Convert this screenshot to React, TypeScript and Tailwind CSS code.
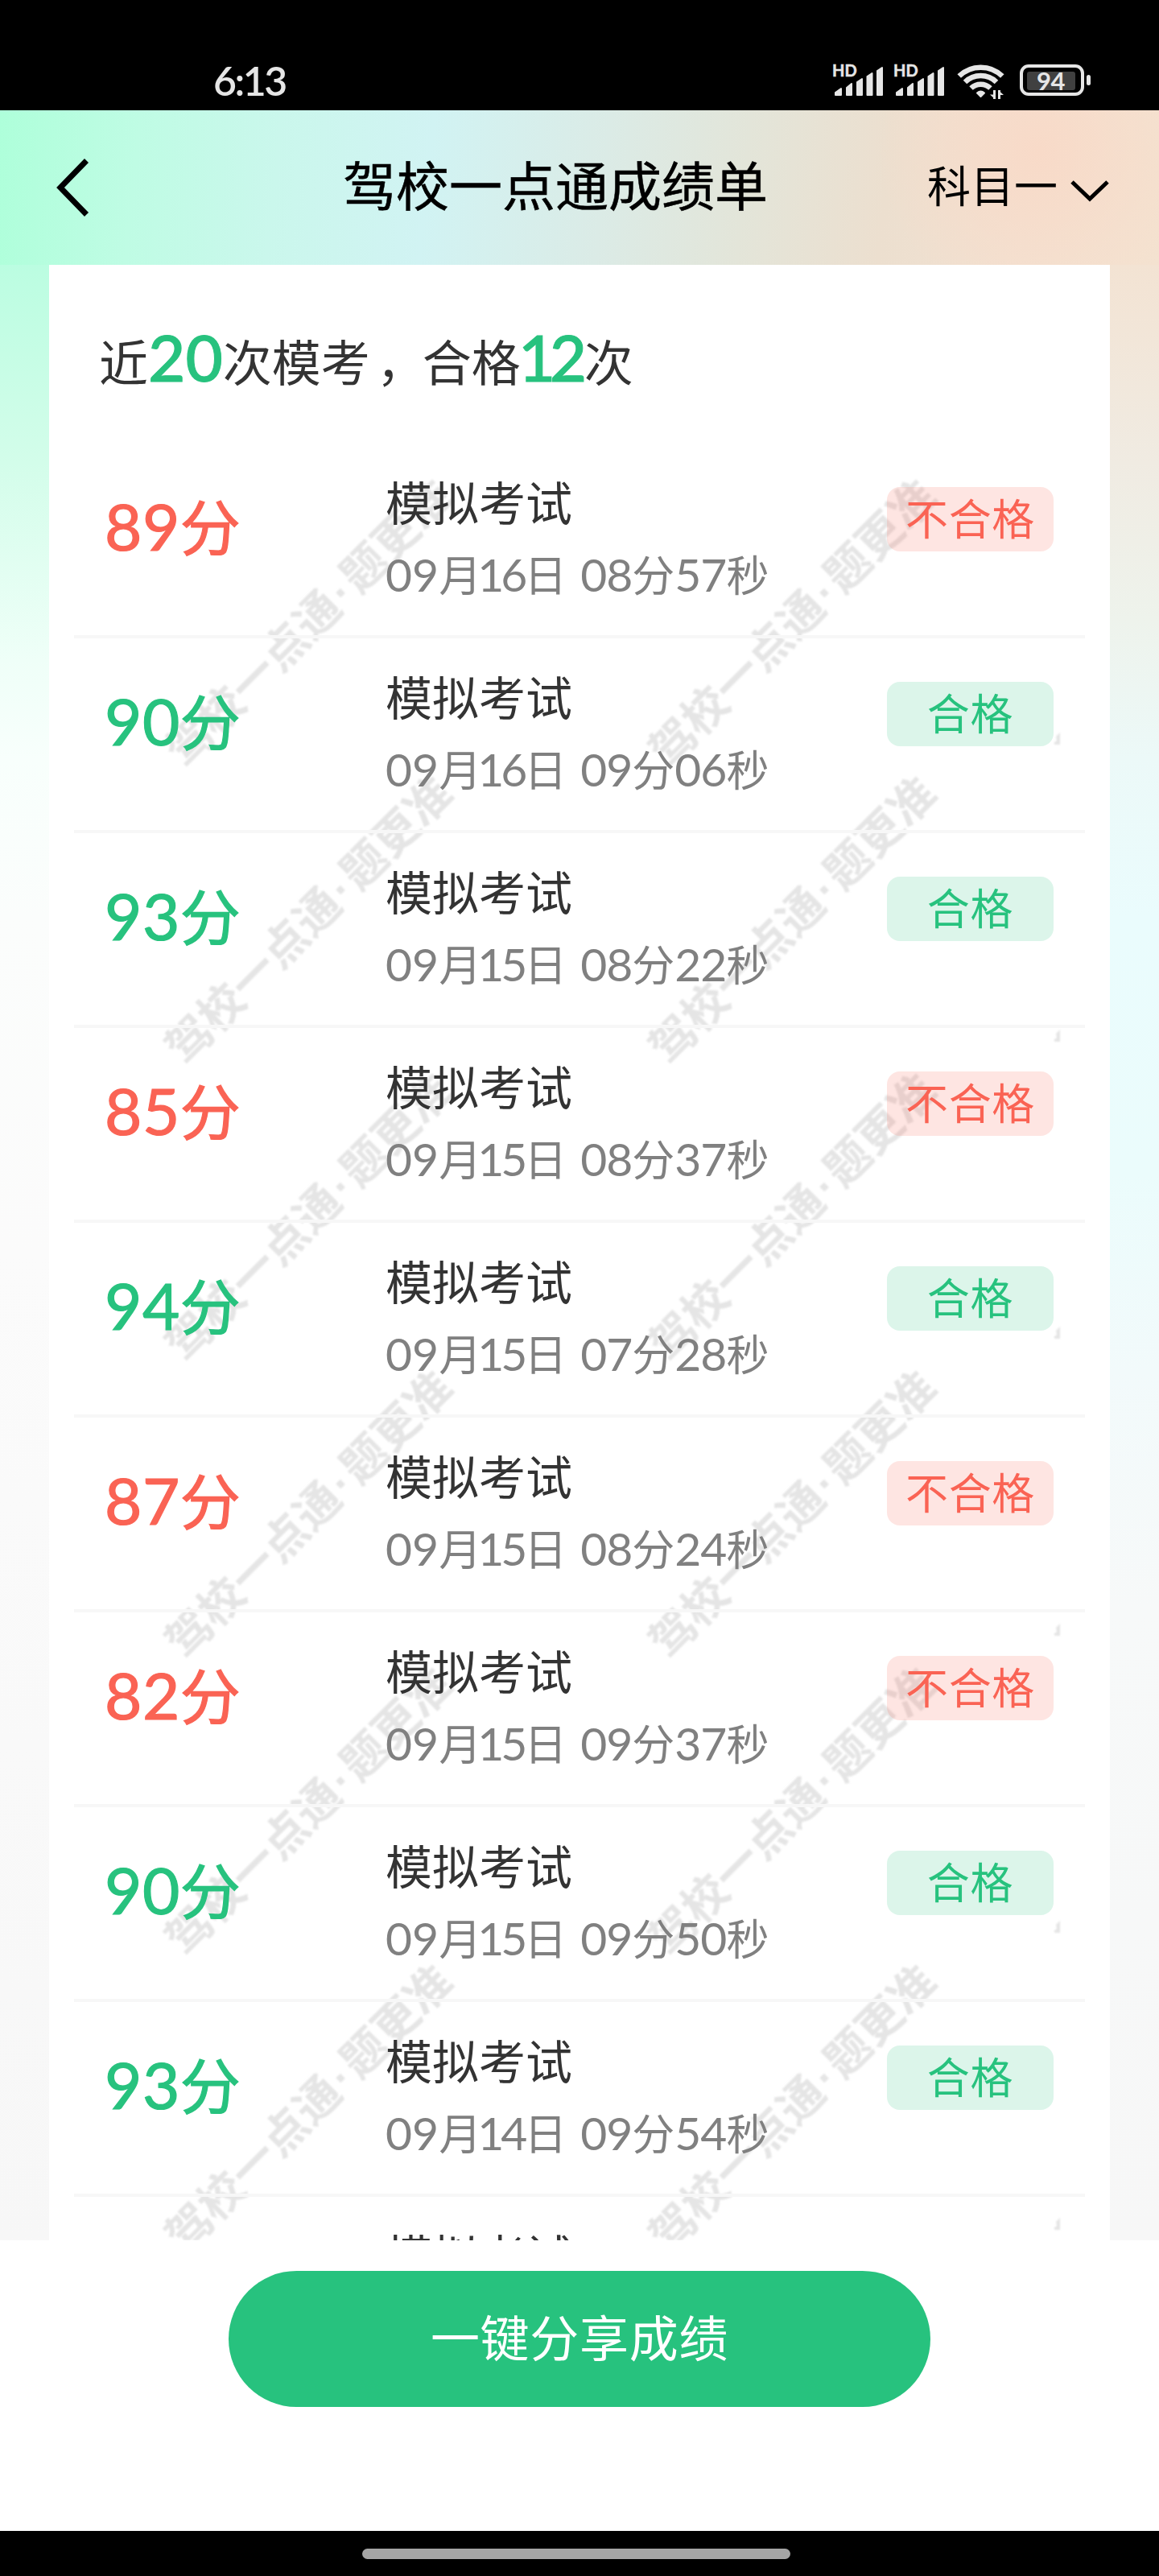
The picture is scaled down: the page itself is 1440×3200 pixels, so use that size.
import React from "react";

const rows = [
  { score: "89", day: "16", month: "09", min: "08", sec: "57" },
  { score: "90", day: "16", month: "09", min: "09", sec: "06" },
  { score: "93", day: "15", month: "09", min: "08", sec: "22" },
  { score: "85", day: "15", month: "09", min: "08", sec: "37" },
  { score: "94", day: "15", month: "09", min: "07", sec: "28" },
  { score: "87", day: "15", month: "09", min: "08", sec: "24" },
  { score: "82", day: "15", month: "09", min: "09", sec: "37" },
  { score: "90", day: "15", month: "09", min: "09", sec: "50" },
  { score: "93", day: "14", month: "09", min: "09", sec: "54" },
  { score: "88", day: "14", month: "09", min: "08", sec: "41" },
];

function Num({ children, snug = false }: { children: string; snug?: boolean }) {
  const spacing = snug ? "tracking-[-1px]" : children.startsWith("1") ? "-ml-[5px] tracking-[-4px]" : "tracking-normal";
  return <span className={"font-['Lato'] text-[57px] leading-[0] " + spacing}>{children}</span>;
}

function Signal() {
  return (
    <div className="relative h-[42px] w-[76px] shrink-0">
      <span className="absolute -left-px top-0 font-['Lato'] text-[20px] font-bold leading-[18px] [-webkit-text-stroke:0.5px_#e6e6e6]">HD</span>
      <svg className="absolute left-0 top-0" width="64" height="42" viewBox="0 0 64 42" fill="#e6e6e6" stroke="#e6e6e6" strokeWidth="2" strokeLinejoin="round">
        <path d="M3 37l7-5v8H3z M17 31l6-5v14h-6z M30 24l6-4v20h-6z M42.500 17l6-4v27h-6z M55 10l6-4v34h-6z" />
      </svg>
    </div>
  );
}

function Wifi() {
  return (
    <svg width="60" height="46" viewBox="0 0 60 46" fill="none" stroke="#e6e6e6" strokeWidth="6.5">
      <path d="M2.700 16.500A38.500 38.500 0 0 1 56.300 16.500" />
      <path d="M10 24A28 28 0 0 1 49 24" />
      <path d="M17.500 31.500A17.500 17.500 0 0 1 41.500 31.500" />
      <path d="M25 37.500Q29.500 33.500 34 37.500L29.500 42z" fill="#e6e6e6" strokeWidth="2" strokeLinejoin="round" />
      <path d="M46.500 34v11M52.500 45V34" strokeWidth="3" />
      <path d="M41 39.500h6v5.500z M52 34.500v5.500h6z" fill="#e6e6e6" stroke="none" />
    </svg>
  );
}

function Battery() {
  return (
    <div className="mt-[2px] flex items-center gap-[3px]">
      <div className="flex h-[39px] w-[80px] rounded-[11px] border-4 border-[#e6e6e6] p-[4.500px]">
        <div className="flex h-[23px] w-[60px] items-center justify-center rounded-[3px] bg-[#404040] font-['Lato'] text-[31px] font-bold leading-[23px] tracking-[-0.500px]">
          94
        </div>
      </div>
      <div className="h-[13px] w-[5px] rounded-full bg-[#e6e6e6]" />
    </div>
  );
}

function Watermark() {
  const xs = [138, 739];
  const ys = [405, 774, 1143, 1512, 1881, 2250];
  return (
    <svg className="absolute left-0 top-0 blur-[0.8px]" width="1225" height="2232" viewBox="0 0 1225 2232" fontFamily="'Noto Sans CJK SC', sans-serif" fill="#e5e5e5">
      {ys.map((y) => (
        <g key={y}>
          {xs.map((x) => (
            <text key={x} transform={`translate(${x} ${y}) rotate(-45)`} fontSize="56" fontWeight="700">
              驾校一点通
              <tspan dx="4" fontFamily="'Liberation Sans'">·</tspan>
              <tspan dx="4">题更准</tspan>
            </text>
          ))}
          <path d={`M1217 ${y - 33}l4-3l-1-5l5-5v15h-6z`} />
        </g>
      ))}
    </svg>
  );
}

export default function App() {
  return (
    <div className="flex h-[3200px] w-[1440px] flex-col overflow-hidden bg-white font-['Noto_Sans_CJK_SC',sans-serif]">
      <div className="flex h-[137px] shrink-0 items-start bg-black pl-[265px] pt-[78px] text-[#e6e6e6]">
        <span className="w-[770px] font-['Lato'] text-[50px] font-semibold leading-[44px] tracking-[-2.5px]">6:13</span>
        <Signal />
        <Signal />
        <div className="ml-[2px] w-[78px]">
          <Wifi />
        </div>
        <Battery />
      </div>

      <div className="flex h-[192px] shrink-0 items-center bg-[radial-gradient(circle_at_1290px_50px,#f8dac8_0%,#f8dac800_200px),linear-gradient(96deg,#aeffda_0%,#bffce4_12%,#caf7ec_24%,#d1f3f3_37%,#dbebe6_52%,#e3e5d9_64%,#ecdfcf_76%,#f3e1d1_88%,#f4e2d0_100%)] text-black">
        <svg className="-mt-px ml-[68px]" width="44" height="72" viewBox="0 0 44 72" fill="none" stroke="black" strokeWidth="7">
          <path d="M39.500 2.500L7 36l32.500 33.500" />
        </svg>
        <h1 className="ml-[314px] w-[726px] pb-[13px] text-[66px] font-normal leading-[66px] [-webkit-text-stroke:0.5px_black]">驾校一点通成绩单</h1>
        <span className="w-[178px] pb-[9px] text-[54px] leading-[54px]">科目一</span>
        <svg className="mt-[7px]" width="48" height="30" viewBox="0 0 48 30" fill="none" stroke="black" strokeWidth="5">
          <path d="M2 4l22 21L46 4" />
        </svg>
      </div>

      <div className="flex h-[2454px] shrink-0">
        <div className="w-[61px] bg-[linear-gradient(180deg,#bbfde1_0%,#d3fdea_10%,#effff8_20%,#f8fffc_25%,#fbfdfc_33%,#fbfbfb_50%,#f7f7f7_100%)]" />
        <div className="flex w-[1318px] flex-col overflow-hidden bg-white px-[31px]">
          <div className="h-[222px] shrink-0 whitespace-nowrap pl-[31px] pt-[88px] text-[61px] leading-[61px] text-[#333]">
            近<span className="font-['Lato'] text-[80px] font-medium leading-[0] text-[#27c27e] [-webkit-text-stroke:1px_#27c27e]">20</span>
            次模考<span className="mr-[-4px] pl-[8px]">，</span>合格
            <span className="-ml-[3px] mr-[4px] font-['Lato'] text-[80px] font-medium leading-[0] tracking-[-7.5px] text-[#27c27e] [-webkit-text-stroke:1px_#27c27e]">12</span>
            次
          </div>
          <div className="relative h-[2232px] overflow-hidden">
            <Watermark />
            {rows.map((r, i) => {
              const pass = Number(r.score) >= 90;
              return (
                <div key={i} className="relative flex h-[242px] items-start border-b-4 border-[#f7f7f7] pl-[38px]">
                  <div
                    className={
                      "mt-[63px] w-[349px] text-[75px] leading-[75px] " +
                      (pass
                        ? "text-[#27c27e] [-webkit-text-stroke:1.2px_#27c27e]"
                        : "text-[#fa6354] [-webkit-text-stroke:1.2px_#fa6354]")
                    }
                  >
                    <span className="font-['Lato'] text-[80px] leading-[0] tracking-[0.5px]">{r.score}</span>分
                  </div>
                  <div className="mt-[42px] w-[623px] whitespace-nowrap">
                    <div className="text-[58px] leading-[58px] text-[#333]">模拟考试</div>
                    <div className="mt-[34px] text-[53px] leading-[54px] text-[#808080]">
                      <Num>{r.month}</Num>月<Num>{r.day}</Num>
                      <span className="mr-[5px]">日</span> <Num snug>{r.min}</Num>分<Num snug>{r.sec}</Num>秒
                    </div>
                  </div>
                  <div
                    className={
                      "mt-[54px] flex h-[80px] w-[207px] items-center justify-center rounded-[16px] pb-[6px] text-[53px] leading-[54px] tracking-[0.7px] " +
                      (pass ? "bg-[#27c27e]/16 text-[#27c27e]" : "bg-[#fa6354]/17 text-[#fa6354]")
                    }
                  >
                    {pass ? "合格" : "不合格"}
                  </div>
                </div>
              );
            })}
          </div>
        </div>
        <div className="w-[61px] bg-[linear-gradient(180deg,#f3e3d3_0%,#f0ebe2_10%,#eef3ec_18%,#ecf9f8_25%,#eafcfd_33%,#ebfcfc_46%,#f2fafb_56%,#f7f9f9_68%,#f7f7f7_100%)]" />
      </div>

      <div className="flex h-[361px] shrink-0 items-start justify-center pt-[38px]">
        <button className="flex h-[169px] w-[872px] items-center justify-center rounded-full bg-[#27c27e] pb-[9px] text-[61px] leading-[61px] tracking-[0.7px] text-white">
          一键分享成绩
        </button>
      </div>
      <div className="h-[56px] shrink-0 bg-black pl-[450px] pt-[22px]">
        <div className="h-[13px] w-[532px] rounded-full bg-[#a5a5a5]" />
      </div>
    </div>
  );
}
